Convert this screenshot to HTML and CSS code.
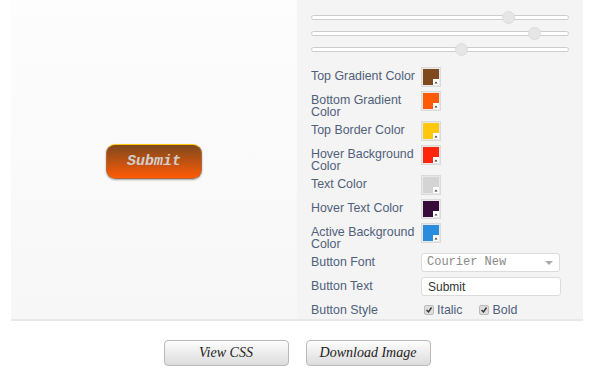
FILE: index.html
```html
<!DOCTYPE html>
<html lang="en">
<head>
    <meta charset="UTF-8">
    <title>CSS Button Generator</title>
    <link rel="stylesheet" href="styles.css">
</head>
<body>
<div class="stage">
    <div class="preview">
        <button class="demo">Submit</button>
    </div>
    <div class="controls">
        <div class="sliders">
            <input type="range" min="0" max="100" value="78">
            <input type="range" min="0" max="100" value="89">
            <input type="range" min="0" max="100" value="59">
        </div>
        <div class="row">
            <label>Top Gradient Color</label>
            <span class="swatch"><i style="background:#7d491d"></i></span>
        </div>
        <div class="row">
            <label>Bottom Gradient Color</label>
            <span class="swatch"><i style="background:#ff5a06"></i></span>
        </div>
        <div class="row">
            <label>Top Border Color</label>
            <span class="swatch"><i style="background:#ffc80c"></i></span>
        </div>
        <div class="row">
            <label>Hover Background Color</label>
            <span class="swatch"><i style="background:#ff260c"></i></span>
        </div>
        <div class="row">
            <label>Text Color</label>
            <span class="swatch"><i style="background:#d4d4d4"></i></span>
        </div>
        <div class="row">
            <label>Hover Text Color</label>
            <span class="swatch"><i style="background:#360c38"></i></span>
        </div>
        <div class="row">
            <label>Active Background Color</label>
            <span class="swatch"><i style="background:#2a8cdc"></i></span>
        </div>
        <div class="row field">
            <label>Button Font</label>
            <div class="select">Courier New<span class="caret"></span></div>
        </div>
        <div class="row field">
            <label>Button Text</label>
            <input class="text" type="text" value="Submit">
        </div>
        <div class="row field">
            <label>Button Style</label>
            <div class="checks">
                <span class="check"><span class="box"></span>Italic</span>
                <span class="check"><span class="box"></span>Bold</span>
            </div>
        </div>
    </div>
</div>
<div class="actions">
    <button class="action">View CSS</button>
    <button class="action">Download Image</button>
</div>
</body>
</html>
```
FILE: styles.css
```css
body {
    margin: 0;
    background-color: #fff;
    font-family: "Liberation Sans", Arial, sans-serif;
}
.stage {
    display: flex;
    width: 572px;
    margin-left: 11px;
    border-bottom: 2px solid #e8e8e8;
}
.preview {
    display: flex;
    align-items: center;
    justify-content: center;
    width: 286px;
    height: 319px;
    background: linear-gradient(#fdfdfd, #f7f7f7);
}
.demo {
    width: 96px;
    height: 35px;
    margin-top: 3px;
    border: 1px solid #b0683a;
    border-top-color: #ffc80c;
    border-radius: 9px;
    background: linear-gradient(#7d491d, #ff5a06);
    box-shadow: 0 1px 2px rgba(0, 0, 0, .35);
    color: #cfcfcf;
    font: italic bold 15px "Liberation Mono", "Courier New", monospace;
}
.controls {
    width: 286px;
    height: 319px;
    box-sizing: border-box;
    padding: 11px 0 0 14px;
    background-color: #f4f4f4;
}
.sliders {
    display: flex;
    flex-direction: column;
    gap: 4px;
    width: 258px;
    margin-bottom: 12px;
}
.sliders input {
    -webkit-appearance: none;
    appearance: none;
    width: 258px;
    height: 12px;
    margin: 0;
    background: transparent;
}
.sliders input::-webkit-slider-runnable-track {
    height: 5px;
    border: 1px solid #cdcdcd;
    border-radius: 4px;
    background: #fff;
}
.sliders input::-webkit-slider-thumb {
    -webkit-appearance: none;
    width: 13px;
    height: 13px;
    margin-top: -5px;
    border: 1px solid #dcdcdc;
    border-radius: 50%;
    background: #e6e6e6;
}
.row {
    display: flex;
    align-items: flex-start;
    min-height: 24px;
}
.row label {
    flex: none;
    width: 107px;
    margin-right: 3px;
    padding: 3px 0;
    line-height: 12px;
    font-size: 12.4px;
    color: #51607a;
}
.swatch {
    position: relative;
    width: 16px;
    height: 16px;
    padding: 1px;
    border: 1px solid #dadada;
    background: #e8e8e8;
}
.swatch i {
    display: block;
    width: 16px;
    height: 16px;
}
.swatch::after {
    content: "";
    position: absolute;
    right: 1px;
    bottom: 1px;
    width: 6px;
    height: 6px;
    background: #fff url("data:image/svg+xml,%3Csvg xmlns='http://www.w3.org/2000/svg' width='6' height='6'%3E%3Cpath d='M1.5 4.5h3L3 2.5z' fill='%23333'/%3E%3C/svg%3E");
}
.select {
    position: relative;
    width: 132px;
    height: 17px;
    padding: 0 0 0 5px;
    border: 1px solid #dcdcdc;
    border-radius: 3px;
    background: #fff;
    font: 12px/17px "Liberation Mono", "Courier New", monospace;
    color: #8a8a8a;
}
.caret {
    position: absolute;
    right: 6px;
    top: 7px;
    border: 4px solid transparent;
    border-top: 4px solid #aaa;
    border-bottom: 0;
}
.text {
    width: 132px;
    height: 17px;
    margin: 0;
    padding: 0 0 0 6px;
    border: 1px solid #dcdcdc;
    border-radius: 3px;
    font: 12px "Liberation Sans", Arial, sans-serif;
    color: #333;
}
.checks {
    display: flex;
    gap: 17px;
    padding: 3px 0 0 3px;
    font-size: 12.4px;
    line-height: 12px;
    color: #51607a;
}
.check {
    display: flex;
    align-items: center;
    gap: 3px;
}
.box {
    width: 8px;
    height: 8px;
    border: 1px solid #bbb;
    border-radius: 2px;
    background: #ddd url("data:image/svg+xml,%3Csvg xmlns='http://www.w3.org/2000/svg' width='8' height='8'%3E%3Cpath d='M1.5 4l2 2 3-4.5' stroke='%23333' stroke-width='1.4' fill='none'/%3E%3C/svg%3E");
}
.actions {
    display: flex;
    justify-content: center;
    gap: 17px;
    width: 572px;
    margin: 19px 0 0 11px;
}
.action {
    width: 125px;
    height: 26px;
    border: 1px solid #b9b9b9;
    border-radius: 4px;
    background: linear-gradient(#fdfdfd, #dcdcdc);
    font: italic 14px "Liberation Serif", "Times New Roman", serif;
    color: #222;
}
```
